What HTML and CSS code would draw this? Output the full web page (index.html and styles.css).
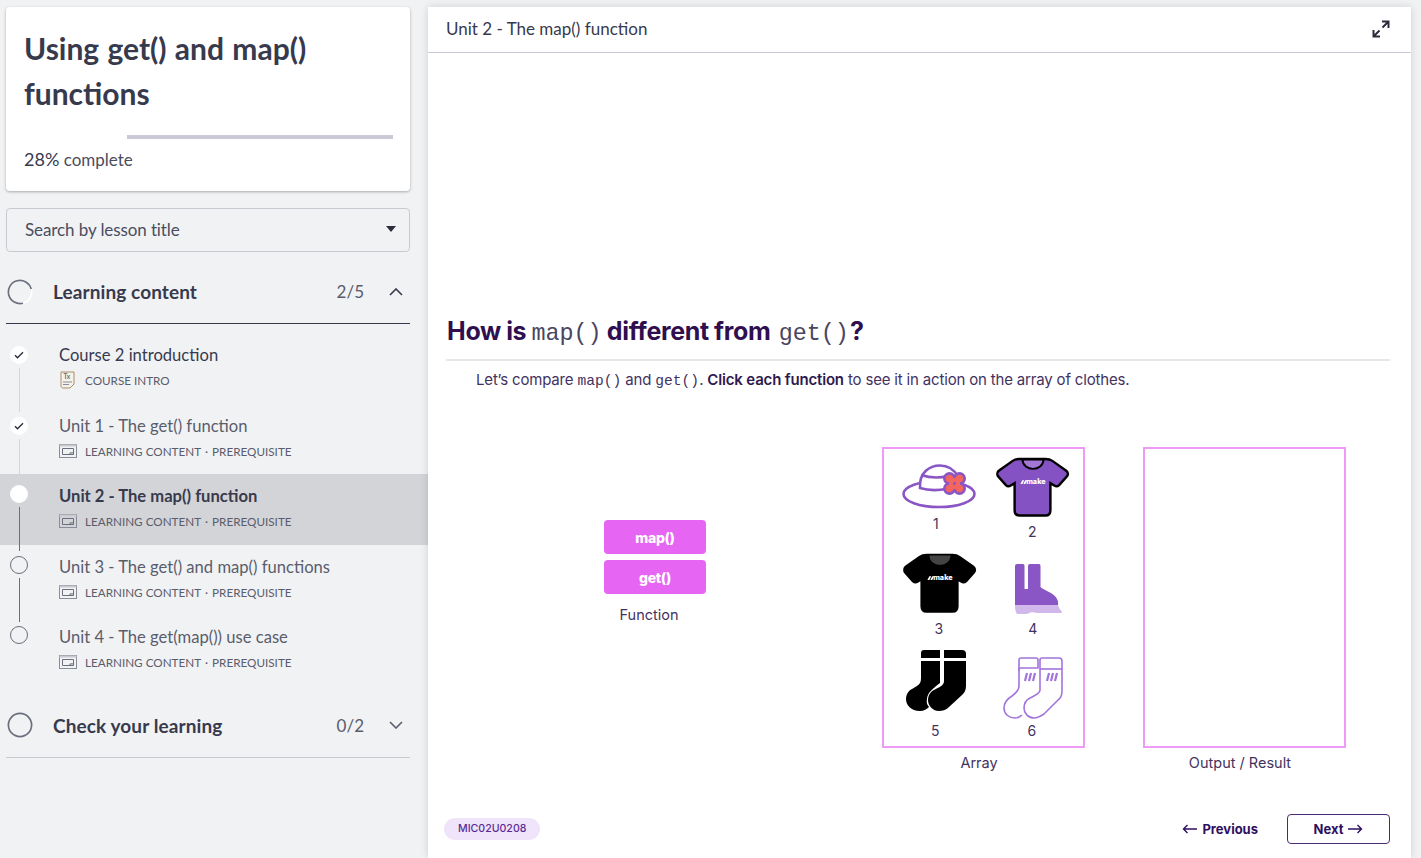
FILE: index.html
```html
<!DOCTYPE html>
<html lang="en">
<head>
    <meta charset="UTF-8">
    <title>Unit 2 - The map() function</title>
    <link rel="stylesheet" href="styles.css">
</head>
<body>
<svg class="defs">
    <defs>
        <symbol id="slide" viewBox="0 0 18 14">
            <rect x="0.5" y="0.5" width="17" height="13" fill="none" stroke="#8a8c98"/>
            <rect x="0.5" y="0.5" width="17" height="2" fill="#c9cad1"/>
            <path d="M3.5 4.5h11v6h-3.5v-1.6h3.5M3.5 4.5v6h7.5" fill="none" stroke="#6b6e7c"/>
        </symbol>
        <symbol id="shirt" viewBox="0 0 76 62">
            <path d="M25 2h26c3 0 5 .6 7 2l14 10c2 1.500 3 4 1 6l-8 9c-1.500 1.500-3.500 1.500-5 .5l-4-2.500v28c0 3.500-2 5.500-5 5.500H24c-3 0-5-2-5-5.500v-28l-4 2.500c-1.500 1-3.500 1-5-.5l-8-9c-2-2-1-4.500 1-6l14-10c2-1.400 4-2 7-2z" stroke-width="2.500" stroke="#000"/>
        </symbol>
    </defs>
</svg>

<aside class="sidebar">
    <div class="course-card">
        <h1>Using get() and map() functions</h1>
        <div class="progress"><div class="progress-done"></div><div class="progress-rest"></div></div>
        <p class="complete"><b>28%</b> complete</p>
    </div>

    <div class="lesson-search">
        <span>Search by lesson title</span>
        <i class="caret"></i>
    </div>

    <div class="section-head open">
        <svg class="ring" viewBox="0 0 28 28">
            <circle cx="14" cy="14" r="12.500" fill="none" stroke="#fff" stroke-width="1.800"/>
            <path d="M14 1.500A12.500 12.500 0 1 0 26.500 14" transform="rotate(75 14 14)" fill="none" stroke="#6b6e7c" stroke-width="1.800"/>
        </svg>
        <h2>Learning content</h2>
        <span class="count">2/5</span>
        <svg class="chev" viewBox="0 0 14 8"><path d="M1 7l6-6 6 6" fill="none" stroke="#373a4d" stroke-width="1.600"/></svg>
    </div>

    <ul class="lessons">
        <li class="lesson">
            <div class="marker"><span class="dot done"><svg viewBox="0 0 10 8"><path d="M1 4.200l2.500 2.500L9 1.200" fill="none" stroke="#2b2d3c" stroke-width="1.400"/></svg></span><span class="line"></span></div>
            <div>
                <div class="lesson-title first">Course 2 introduction</div>
                <div class="lesson-meta">
                    <svg class="doc-icon" viewBox="0 0 16 18">
                        <path d="M1 1h13v12l-4 4H3c-1 0-2-1-2-2z" fill="#f6f2ea" stroke="#a98d68"/>
                        <path d="M3 11h9M3 13.500h6" stroke="#8a8c98"/>
                        <text x="3.500" y="8" class="tx">Tx</text>
                    </svg>
                    COURSE INTRO
                </div>
            </div>
        </li>
        <li class="lesson">
            <div class="marker"><span class="dot done"><svg viewBox="0 0 10 8"><path d="M1 4.200l2.500 2.500L9 1.200" fill="none" stroke="#2b2d3c" stroke-width="1.400"/></svg></span><span class="line"></span></div>
            <div>
                <div class="lesson-title">Unit 1 - The get() function</div>
                <div class="lesson-meta"><svg class="slide-icon"><use href="#slide"/></svg>LEARNING CONTENT<span class="sep">·</span>PREREQUISITE</div>
            </div>
        </li>
        <li class="lesson current">
            <div class="marker raised"><span class="dot full"></span><span class="line dark"></span></div>
            <div>
                <div class="lesson-title">Unit 2 - The map() function</div>
                <div class="lesson-meta"><svg class="slide-icon"><use href="#slide"/></svg>LEARNING CONTENT<span class="sep">·</span>PREREQUISITE</div>
            </div>
        </li>
        <li class="lesson">
            <div class="marker raised"><span class="dot"></span><span class="line dark"></span></div>
            <div>
                <div class="lesson-title">Unit 3 - The get() and map() functions</div>
                <div class="lesson-meta"><svg class="slide-icon"><use href="#slide"/></svg>LEARNING CONTENT<span class="sep">·</span>PREREQUISITE</div>
            </div>
        </li>
        <li class="lesson">
            <div class="marker raised"><span class="dot"></span></div>
            <div>
                <div class="lesson-title">Unit 4 - The get(map()) use case</div>
                <div class="lesson-meta"><svg class="slide-icon"><use href="#slide"/></svg>LEARNING CONTENT<span class="sep">·</span>PREREQUISITE</div>
            </div>
        </li>
    </ul>

    <div class="section-head closed">
        <svg class="ring" viewBox="0 0 28 28"><circle cx="14" cy="14" r="12.500" fill="none" stroke="#6b6e7c" stroke-width="1.800"/></svg>
        <h2>Check your learning</h2>
        <span class="count">0/2</span>
        <svg class="chev" viewBox="0 0 14 8"><path d="M1 1l6 6 6-6" fill="none" stroke="#5a5d6c" stroke-width="1.600"/></svg>
    </div>
</aside>

<main class="unit">
    <header class="unit-head">
        <span>Unit 2 - The map() function</span>
        <svg class="expand" viewBox="0 0 18 18">
            <path d="M10.500 7.500L16.500 1.500M10 1.500h6.500V8M7.500 10.500L1.500 16.500M1.500 10v6.500H8" fill="none" stroke="#2b2d3c" stroke-width="2"/>
        </svg>
    </header>

    <div class="unit-body">
        <h3>How is <code>map()</code> different from <code class="second">get()</code>?</h3>
        <p class="intro">Let’s compare <code>map()</code> and <code>get()</code>. <b>Click each function</b> to see it in action on the array of clothes.</p>

        <div class="activity">
            <div class="functions">
                <button class="fn-btn">map()</button>
                <button class="fn-btn">get()</button>
                <div class="caption">Function</div>
            </div>

            <div class="array-col">
                <div class="array-box">
                    <div class="cloth hat">
                        <svg width="76" height="46" viewBox="0 0 76 46">
                            <ellipse cx="37" cy="30" rx="35.500" ry="13" fill="#fff" stroke="#8a55c4" stroke-width="2.600"/>
                            <path d="M18 24C17 8 28 1.500 38 1.500c8 0 14 4 18 11l-10 12c-9 2-20 2-28-.5z" fill="#fff" stroke="#8a55c4" stroke-width="2.600"/>
                            <path d="M19 11c9 3 19 3 27 1" fill="none" stroke="#8a55c4" stroke-width="2.600"/>
                            <g fill="#8a55c4">
                                <circle cx="47.500" cy="14.500" r="6.500"/><circle cx="57.500" cy="14.500" r="6.500"/>
                                <circle cx="47.500" cy="24.500" r="6.500"/><circle cx="57.500" cy="24.500" r="6.500"/>
                            </g>
                            <g fill="#f2665f">
                                <circle cx="47.500" cy="14.500" r="3.800"/><circle cx="57.500" cy="14.500" r="3.800"/>
                                <circle cx="47.500" cy="24.500" r="3.800"/><circle cx="57.500" cy="24.500" r="3.800"/>
                                <rect x="47" y="14" width="11" height="11"/>
                            </g>
                            <circle cx="52.500" cy="19.500" r="1.400" fill="#8a55c4"/>
                        </svg>
                        <span class="num">1</span>
                    </div>
                    <div class="cloth shirt-a">
                        <svg class="shirt purple" width="74" height="60" viewBox="0 0 76 62">
                            <use href="#shirt" width="76" height="62"/>
                            <path d="M27 2.500c1 13 21 13 22 0z" fill="#a377d6" stroke="#000" stroke-width="2"/>
                            <path d="M25 28l2-4h2l-2 4zM28 28l2-4h2l-2 4z" class="mark"/>
                            <text x="41" y="28" class="brand">make</text>
                        </svg>
                        <span class="num">2</span>
                    </div>
                    <div class="cloth shirt-b">
                        <svg class="shirt black" width="74" height="60" viewBox="0 0 76 62">
                            <use href="#shirt" width="76" height="62"/>
                            <path d="M27 2.500c1 13 21 13 22 0z" fill="#444"/>
                            <path d="M25 28l2-4h2l-2 4zM28 28l2-4h2l-2 4z" class="mark"/>
                            <text x="41" y="28" class="brand">make</text>
                        </svg>
                        <span class="num">3</span>
                    </div>
                    <div class="cloth boot">
                        <svg width="47" height="50" viewBox="0 0 47 50">
                            <path d="M0 2q0-2 2-2h6q1.500 0 1.500 2v23H13V2q0-2 2-2h9q1.500 0 1.500 2v21c3 3 13 6 16 11q2 3 1.500 7H0z" fill="#8a55c4"/>
                            <path d="M0 41h43q1 4 4 6.500 0 1.500-1.500 1.500H22c-3-1-7-1-10 1H2c-2-3-2-6-2-9z" fill="#d0b8ea"/>
                        </svg>
                        <span class="num">4</span>
                    </div>
                    <div class="cloth socks-a">
                        <svg width="60" height="61" viewBox="0 0 60 61">
                            <path d="M15 3q0-3 3-3h16v8H15z"/>
                            <path d="M38 0h18q4 0 4 4v4H38z"/>
                            <path d="M15 11h19v22c-4 3-8 6-11 10q-3 5-2 11l2 3c-2 2-5 4-9 4C5 61 0 55 0 49c0-4 2-8 6-10l5-3c3-2 4-4 4-8z"/>
                            <path d="M38 11h22v25c0 4-1.500 7-4 9L43 57c-3 3-7 4-10 4-6 0-11-5-11-11 0-4 2-8 6-10 5-3 10-4 10-9z"/>
                        </svg>
                        <span class="num">5</span>
                    </div>
                    <div class="cloth socks-b">
                        <svg width="62" height="62" viewBox="0 0 62 62" fill="none" stroke="#a274dc" stroke-width="1.600">
                            <path d="M17 14V3c0-1 1-2 2-2h15c1 0 2 1 2 2v8H17"/>
                            <path d="M17 11v18c0 4-3 7-7 10-5 3-8 7-8 12 0 6 5 10 11 10 3 0 5-1 7-3"/>
                            <path d="M38 33V3c0-1 1-2 2-2h17c2 0 3 1 3 3v30c0 4-1 7-4 9L42 57c-3 2-6 4-10 4-6 0-10-5-10-10 0-4 2-8 6-10 5-3 10-4 10-8"/>
                            <path d="M38 12h22"/>
                            <path d="M23 24l2-8M27 24l2-8M31 24l2-8M45 24l2-8M49 24l2-8M53 24l2-8" stroke-width="2.200"/>
                        </svg>
                        <span class="num">6</span>
                    </div>
                </div>
                <div class="caption">Array</div>
            </div>

            <div class="output-col">
                <div class="array-box empty"></div>
                <div class="caption">Output / Result</div>
            </div>
        </div>
    </div>

    <footer class="unit-foot">
        <span class="unit-code">MIC02U0208</span>
        <div class="nav">
            <a class="prev"><svg viewBox="0 0 16 10"><path d="M15 5H1.500M5.500 1L1.500 5l4 4" fill="none" stroke="#2f0f5f" stroke-width="1.400"/></svg>Previous</a>
            <a class="next">Next<svg viewBox="0 0 16 10"><path d="M1 5h13.500M10.500 1l4 4-4 4" fill="none" stroke="#2f0f5f" stroke-width="1.400"/></svg></a>
        </div>
    </footer>
</main>
</body>
</html>
```

FILE: styles.css
```css
* {
    box-sizing: border-box;
}
html, body {
    height: 858px;
    overflow: hidden;
}
body {
    margin: 0;
    display: flex;
    background: #f1f2f4;
    color: #373a4d;
    font-family: Lato, "Liberation Sans", sans-serif;
}
.defs {
    display: none;
}

/* sidebar */
.sidebar {
    width: 428px;
    flex: none;
    padding-top: 7px;
}
.course-card {
    width: 404px;
    height: 184px;
    margin-left: 6px;
    padding: 19px 17px 0 18px;
    background: #fff;
    border-radius: 4px;
    box-shadow: 0 1px 3px rgba(0, 0, 0, 0.3);
}
.course-card h1 {
    margin: 0;
    font-size: 30px;
    line-height: 45px;
    font-weight: 700;
    word-spacing: 1px;
    color: #373a4d;
}
.progress {
    display: flex;
    height: 4px;
    margin: 19px 0 0;
}
.progress-done {
    width: 103px;
}
.progress-rest {
    flex: 1;
    background: #c9cad6;
}
.complete {
    margin: 9px 0 0;
    font-size: 17px;
    line-height: 22px;
    color: #4a4d5e;
}
.complete b {
    font-weight: 400;
    font-size: 18px;
    color: #373a4d;
}
.lesson-search {
    display: flex;
    justify-content: space-between;
    align-items: center;
    width: 404px;
    height: 44px;
    margin: 17px 0 0 6px;
    padding: 0 18px 2px;
    border: 1px solid #c9cad1;
    border-radius: 4px;
    font-size: 17px;
    letter-spacing: -0.1px;
    color: #4a4d5e;
}
.caret {
    width: 0;
    height: 0;
    margin-right: -5px;
    border-left: 5px solid transparent;
    border-right: 5px solid transparent;
    border-top: 6px solid #2b2d3c;
}
.section-head {
    display: flex;
    align-items: center;
    width: 404px;
    margin-left: 6px;
    padding: 8px 0 0 1px;
    height: 72px;
    border-bottom: 1px solid #373a4d;
}
.section-head.closed {
    height: 62px;
    padding-top: 0;
    padding-bottom: 2px;
    border-bottom-color: #c9cad1;
}
.ring {
    width: 26px;
    height: 26px;
    flex: none;
}
.section-head h2 {
    flex: 1;
    margin: 0 0 0 20px;
    font-size: 19px;
    font-weight: 700;
    letter-spacing: 0.1px;
    color: #373a4d;
}
.count {
    font-size: 17px;
    color: #5a5d6c;
    margin-right: 25px;
}
.chev {
    width: 14px;
    height: 8px;
    margin-right: 7px;
}

.lessons {
    list-style: none;
    margin: 0 0 10px;
    padding: 9px 0 0;
}
.lesson {
    display: flex;
    height: 70.5px;
    padding-top: 13px;
    color: #5a5d6c;
}
.lesson.current {
    background: #d3d4d8;
}
.marker {
    display: flex;
    flex-direction: column;
    align-items: center;
    width: 18px;
    margin: 0 31px 0 10px;
    flex: none;
    height: 70px;
}
.marker.raised {
    margin-top: -2px;
}
.dot {
    display: flex;
    align-items: center;
    justify-content: center;
    width: 18px;
    height: 18px;
    flex: none;
    border: 1px solid #6b6e7c;
    border-radius: 50%;
}
.dot.done, .dot.full {
    background: #fff;
    border-color: #fff;
}
.dot svg {
    width: 10px;
    height: 8px;
}
.line {
    width: 1px;
    height: 44px;
    margin-top: 4px;
    background: #d5d6da;
}
.line.dark {
    background: #6b6e7c;
}
.lesson-title {
    font-size: 16.600px;
    line-height: 19px;
}
.lesson-title.first {
    color: #373a4d;
}
.current .lesson-title {
    font-weight: 700;
    color: #373a4d;
}
.lesson-meta {
    display: flex;
    align-items: center;
    height: 20px;
    margin-top: 5px;
    font-size: 11.700px;
    color: #5a5d6c;
}
.sep {
    margin: 0 4px;
}
.slide-icon {
    width: 18px;
    height: 14px;
    margin-right: 8px;
}
.doc-icon {
    width: 16px;
    height: 18px;
    margin: 0 9px 0 1px;
}
.tx {
    font-size: 6.500px;
    font-weight: 700;
    fill: #6b6e7c;
}

/* unit panel */
.unit {
    width: 983px;
    height: 851px;
    margin-top: 7px;
    display: flex;
    flex-direction: column;
    background: #fff;
    box-shadow: 0 0 8px rgba(0, 0, 0, 0.14);
}
.unit-head {
    display: flex;
    justify-content: space-between;
    align-items: center;
    height: 46px;
    flex: none;
    padding: 0 21px 2px 18px;
    border-bottom: 1px solid #c9cad1;
    font-size: 17px;
    color: #373a4d;
}
.expand {
    width: 18px;
    height: 18px;
}
.unit-body {
    flex: 1;
    padding: 262px 21px 0 18px;
    color: #2f1a4f;
    font-family: Inter, "Liberation Sans", sans-serif;
}
.unit-body h3 {
    margin: 0;
    height: 46px;
    padding-left: 1px;
    border-bottom: 2px solid #e6e6e8;
    font-size: 25px;
    line-height: 32px;
    font-weight: 700;
    letter-spacing: -0.3px;
    word-spacing: -0.5px;
    color: #2f0f4f;
}
.unit-body h3 code {
    font-family: "Liberation Mono", monospace;
    font-weight: 400;
    font-size: 23.400px;
    letter-spacing: 0;
    color: #4a4560;
}
.unit-body h3 code.second {
    margin-left: 3px;
    margin-right: 1px;
}
.intro {
    margin: 9px 0 0 30px;
    font-size: 15px;
    line-height: 20px;
    letter-spacing: -0.17px;
    color: #43325f;
}
.intro code {
    font-family: "Liberation Mono", monospace;
    font-size: 14.600px;
    letter-spacing: 0;
}
.intro b {
    font-weight: 600;
    color: #2f1a4f;
}
.activity {
    display: flex;
    margin-top: 56px;
}
.functions {
    width: 102px;
    margin: 73px 0 0 158px;
    flex: none;
}
.fn-btn {
    display: block;
    width: 102px;
    height: 34px;
    margin-bottom: 6px;
    padding: 0;
    border: none;
    border-radius: 4px;
    background: #e765f3;
    color: #fff;
    font: 800 14px Inter, "Liberation Sans", sans-serif;
    letter-spacing: -0.3px;
}
.caption {
    font-size: 14.500px;
    line-height: 20px;
    text-align: center;
    padding-right: 9px;
    color: #43325f;
}
.functions .caption {
    margin-top: 11px;
    padding-right: 12px;
}
.array-col {
    width: 203px;
    margin-left: 176px;
    flex: none;
}
.output-col {
    width: 203px;
    margin-left: 58px;
    flex: none;
}
.array-box {
    display: grid;
    grid-template-columns: 1fr 1fr;
    grid-template-rows: 97px 104px 1fr;
    height: 301px;
    margin-bottom: 5px;
    border: 2px solid #f09af8;
}
.cloth {
    display: flex;
    flex-direction: column;
    align-items: center;
    font-size: 14px;
}
.cloth svg {
    display: block;
    flex: none;
}
.num {
    line-height: 18px;
    color: #43325f;
}
.hat { padding: 15px 0 0 12px; }
.hat .num { margin: 5px 0 0 -8px; }
.shirt-a { padding: 8px 0 0 0; }
.shirt-a .num { margin: 6px 0 0 -2px; }
.shirt-b { padding: 7px 0 0 12px; }
.shirt-b .num { margin: 7px 0 0 -2px; }
.boot { padding: 18px 0 0 10px; }
.boot .num { margin: 6px 0 0 -11px; }
.socks-a { padding: 0 0 0 5px; }
.socks-a .num { margin: 11px 0 0 -2px; }
.socks-b { padding: 7px 0 0 0; }
.socks-b .num { margin: 3px 0 0 -3px; }
.shirt.purple { fill: #8452c2; }
.shirt.black { fill: #000; }
.mark {
    fill: #fff;
}
.brand {
    font-size: 7.500px;
    font-weight: 800;
    fill: #fff;
    stroke: none;
    text-anchor: middle;
    font-family: Inter, "Liberation Sans", sans-serif;
}

.unit-foot {
    display: flex;
    justify-content: space-between;
    align-items: center;
    flex: none;
    height: 30px;
    margin-bottom: 14px;
    padding: 0 21px 0 16px;
    font-family: Inter, "Liberation Sans", sans-serif;
}
.unit-code {
    display: block;
    padding: 0 14px;
    height: 22px;
    line-height: 22px;
    border-radius: 11px;
    background: #f0e4fb;
    font-size: 10.600px;
    font-weight: 500;
    color: #5a2b96;
}
.nav {
    display: flex;
    align-items: center;
    gap: 29px;
}
.prev, .next {
    display: flex;
    align-items: center;
    gap: 4px;
    font-size: 13px;
    font-weight: 700;
    color: #2f0f5f;
}
.next {
    justify-content: center;
    width: 103px;
    height: 30px;
    border: 1px solid #4a2a78;
    border-radius: 4px;
}
.prev svg, .next svg {
    width: 16px;
    height: 10px;
}
```
